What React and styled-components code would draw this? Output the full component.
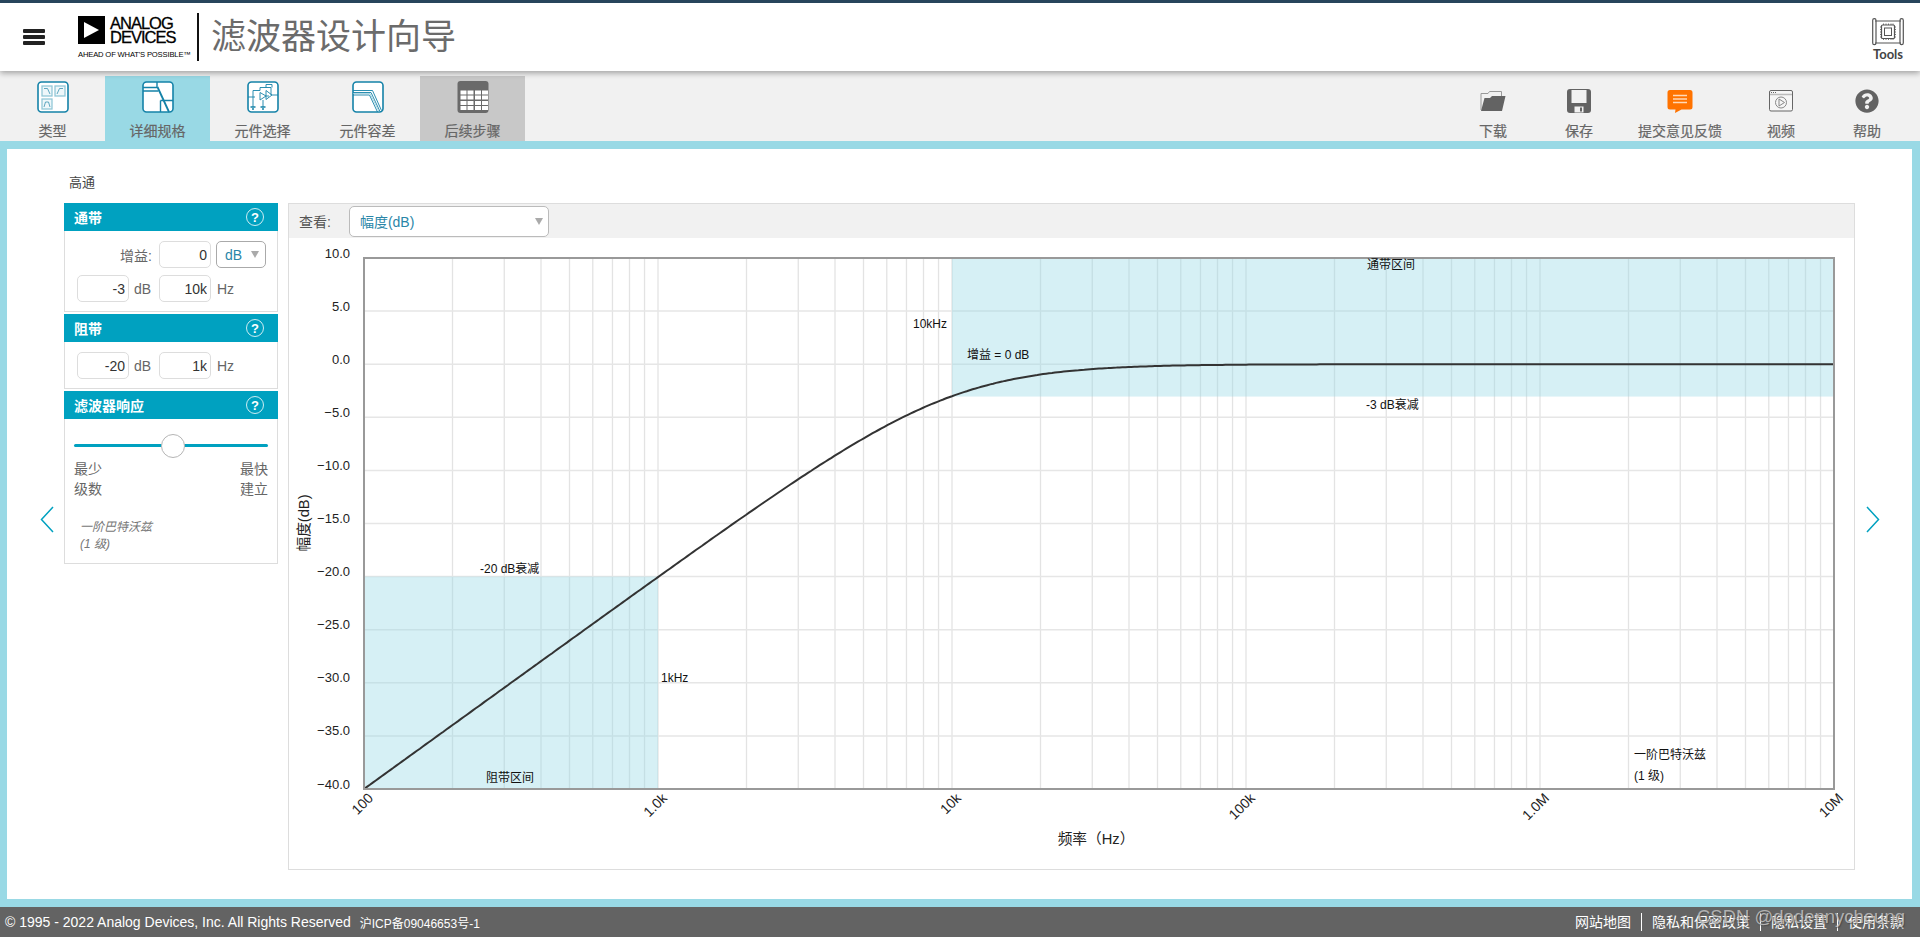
import React from 'react';
import styled, { createGlobalStyle } from 'styled-components';
import { FaQuestionCircle } from 'react-icons/fa';

const FONT = `"Liberation Sans", "Noto Sans CJK SC", sans-serif`;
const TEAL = '#00a1c0';
const FRAME = '#99d9e5';

const GlobalStyle = createGlobalStyle`
  html, body {
    margin: 0;
    padding: 0;
    overflow: hidden;
    font-family: ${FONT};
  }
  * { box-sizing: border-box; }
`;

const Page = styled.div`
  display: flex;
  flex-direction: column;
  width: 1920px;
  height: 937px;
  background: #fff;
`;

const Header = styled.header`
  position: relative;
  z-index: 2;
  display: flex;
  align-items: center;
  height: 71px;
  padding: 0 16px 0 23px;
  border-top: 3px solid #27455c;
  background: #fff;
  box-shadow: 0 2px 6px rgba(0, 0, 0, 0.35);
`;

const Burger = styled.div`
  display: flex;
  flex-direction: column;
  gap: 2.5px;
  width: 22px;
  span {
    height: 3.5px;
    background: #222;
    border-radius: 1px;
  }
`;

const Logo = styled.div`
  display: flex;
  flex-direction: column;
  width: 103px;
  margin-left: 33px;
  color: #000;
`;

const LogoRow = styled.div`
  display: flex;
  gap: 5px;
`;

const LogoWords = styled.div`
  font-size: 16.5px;
  font-weight: 400;
  line-height: 14px;
  letter-spacing: -1px;
  -webkit-text-stroke: 0.3px #000;
`;

const LogoTag = styled.div`
  margin-top: 7px;
  font-size: 7.6px;
  line-height: 7px;
  white-space: nowrap;
  letter-spacing: -0.15px;
`;

const Divider = styled.div`
  width: 2px;
  height: 48px;
  margin: 0 12px 0 16px;
  background: #111;
`;

const Title = styled.h1`
  margin: 0;
  font-size: 35px;
  font-weight: 400;
  line-height: 44px;
  color: #6b6b6b;
`;

const ToolsLink = styled.div`
  display: flex;
  flex-direction: column;
  align-items: center;
  margin-left: auto;
  padding-top: 5px;
  font-family: Lato, ${FONT};
  font-size: 13px;
  font-weight: 700;
  line-height: 16px;
  color: #444;
`;

const Nav = styled.nav`
  display: flex;
  align-items: flex-end;
  height: 70px;
  padding-right: 10px;
  background: #f1f1f1;
`;

const Tab = styled.div`
  display: flex;
  flex-direction: column;
  align-items: center;
  width: 105px;
  height: 65px;
  padding-top: 5px;
  background: ${(p) => (p.$bg ? p.$bg : 'transparent')};
`;

const TabLabel = styled.div`
  margin-top: 9px;
  font-size: 14px;
  line-height: 18px;
  color: #666;
  -webkit-text-stroke: 0.2px #666;
`;

const Actions = styled.div`
  display: flex;
  margin-left: auto;
`;

const Action = styled.div`
  display: flex;
  flex-direction: column;
  align-items: center;
  width: ${(p) => (p.$wide ? '116px' : '86px')};
  height: 70px;
  padding-top: 18px;
  color: #636363;
`;

const ActionIcon = styled.div`
  display: flex;
  align-items: center;
  justify-content: center;
  height: 24px;
`;

const ActionLabel = styled.div`
  margin-top: 9px;
  font-size: 14px;
  line-height: 18px;
  color: #666;
  -webkit-text-stroke: 0.2px #666;
`;

const Frame = styled.div`
  display: flex;
  flex: 1;
  min-height: 0;
  border-style: solid;
  border-color: ${FRAME};
  border-width: 8px 8px 8px 7px;
  background: #fff;
`;

const SideArrow = styled.div`
  display: flex;
  align-items: center;
  justify-content: ${(p) => (p.$right ? 'flex-start' : 'flex-end')};
  width: 57px;
  padding: 0 ${(p) => (p.$right ? '0' : '10px')} 10px ${(p) => (p.$right ? '11px' : '0')};
`;

const Workspace = styled.div`
  flex: 1;
  min-width: 0;
`;

const Caption = styled.div`
  height: 54px;
  padding: 24px 0 0 5px;
  font-size: 13px;
  line-height: 20px;
  color: #444;
`;

const Columns = styled.div`
  display: flex;
  gap: 10px;
`;

const Sidebar = styled.aside`
  display: flex;
  flex-direction: column;
  gap: 2px;
  width: 214px;
`;

const PanelHead = styled.div`
  display: flex;
  align-items: center;
  justify-content: space-between;
  height: 28px;
  padding: 0 14px 0 10px;
  background: ${TEAL};
  font-size: 14px;
  font-weight: 700;
  color: #fff;
`;

const HelpBadge = styled.span`
  display: flex;
  align-items: center;
  justify-content: center;
  width: 18px;
  height: 18px;
  border: 1.5px solid rgba(255, 255, 255, 0.8);
  border-radius: 50%;
  font-size: 13px;
  font-weight: 700;
  line-height: 1;
`;

const PanelBody = styled.div`
  border: 1px solid #ddd;
  border-top: 0;
  padding: ${(p) => p.$pad || '10px 0 9px 12px'};
`;

const FormGrid = styled.div`
  display: grid;
  grid-template-columns: 52px 30px 52px auto;
  row-gap: 7px;
  align-items: center;
  font-size: 14px;
  color: #666;
`;

const GainLabel = styled.div`
  grid-column: 1 / span 2;
  padding-right: 7px;
  text-align: right;
`;

const Unit = styled.div`
  padding-left: ${(p) => p.$left || '5px'};
`;

const NumberBox = styled.input`
  width: 52px;
  height: 27px;
  padding: 0 3px 0 0;
  border: 1px solid #ddd;
  border-radius: 5px;
  outline: none;
  background: #fff;
  font-family: ${FONT};
  font-size: 14px;
  text-align: right;
  color: #333;
`;

const UnitSelect = styled.div`
  display: flex;
  align-items: center;
  justify-content: space-between;
  width: 50px;
  height: 27px;
  margin-left: 5px;
  padding: 0 6px 0 8px;
  border: 1px solid #aaa;
  border-radius: 5px;
  color: #2a86a8;
`;

const Caret = styled.span`
  width: 0;
  height: 0;
  border-left: 4px solid transparent;
  border-right: 4px solid transparent;
  border-top: 7px solid #aaa;
`;

const Slider = styled.div`
  position: relative;
  height: 24px;
  &::before {
    content: '';
    position: absolute;
    left: 0;
    right: 0;
    top: 10px;
    height: 3px;
    border-radius: 2px;
    background: ${TEAL};
  }
`;

const Thumb = styled.div`
  position: absolute;
  left: 87px;
  top: 0;
  width: 24px;
  height: 24px;
  border: 1px solid #b5b5b5;
  border-radius: 50%;
  background: #fff;
`;

const SliderLabels = styled.div`
  display: flex;
  justify-content: space-between;
  margin-top: 1px;
  font-size: 14px;
  line-height: 20px;
  color: #666;
`;

const RightText = styled.div`
  text-align: right;
`;

const OrderNote = styled.div`
  margin: 20px 0 0 6px;
  font-size: 12px;
  font-style: italic;
  line-height: 17px;
  color: #777;
`;

const ChartPanel = styled.section`
  flex: 1;
  height: 667px;
  border: 1px solid #ddd;
`;

const ChartBar = styled.div`
  display: flex;
  align-items: center;
  height: 34px;
  padding-left: 10px;
  background: #f1f1f1;
  font-size: 14px;
  color: #555;
`;

const ViewSelect = styled.div`
  display: flex;
  align-items: center;
  justify-content: space-between;
  width: 200px;
  height: 31px;
  margin-left: 18px;
  padding: 0 5px 0 10px;
  border: 1px solid #bbb;
  border-radius: 5px;
  background: #fff;
  color: #2a86a8;
`;

const ChartSvg = styled.svg`
  display: block;
`;

const AxisText = styled.text`
  font-family: ${FONT};
  font-size: ${(p) => p.$size || '13px'};
  fill: #222;
`;

const TitleText = styled.text`
  font-family: ${FONT};
  font-size: 14.7px;
  fill: #222;
`;

const NoteText = styled.text`
  font-family: ${FONT};
  font-size: 12px;
  fill: #111;
`;

const Footer = styled.footer`
  position: relative;
  display: flex;
  align-items: center;
  height: 30px;
  padding: 0 16px 0 5px;
  background: #636363;
  color: #fff;
  font-size: 14px;
`;

const Icp = styled.span`
  margin-left: 9px;
  font-size: 12px;
`;

const FooterLinks = styled.div`
  display: flex;
  align-items: center;
  margin-left: auto;
`;

const FooterLink = styled.span`
  padding: 0 10px;
  border-left: ${(p) => (p.$first ? '0' : '1px solid #fff')};
  line-height: 18px;
  &:last-child { padding-right: 0; }
`;

const Watermark = styled.div`
  position: absolute;
  right: 15px;
  top: -1px;
  font-size: 18.5px;
  line-height: 22px;
  color: rgba(200, 200, 200, 0.8);
  text-shadow: 1px 1px 1px rgba(60, 60, 60, 0.6);
  pointer-events: none;
`;

const BLUE = '#1482a8';
const PALE = '#93c8d8';

const IconFrame = ({ children }) => (
  <svg width="32" height="32" viewBox="0 0 32 32">
    <rect x="1" y="1" width="30" height="30" rx="3.5" fill="#fff" stroke={BLUE} strokeWidth="1.6" />
    {children}
  </svg>
);

const TypeIcon = () => (
  <IconFrame>
    <g fill="#eef7fa" stroke={PALE} strokeWidth="1.3">
      <rect x="5" y="5" width="10" height="10" />
      <rect x="18" y="5" width="10" height="10" />
      <rect x="5" y="18" width="10" height="10" />
    </g>
    <g fill="none" stroke="#4d9db8" strokeWidth="0.9">
      <path d="M7 7.5h3.5l2.5 5.5" />
      <path d="M20 13l2.5-5.5h3.5" />
      <path d="M7 26l1.5-5h3l1.5 5" />
    </g>
  </IconFrame>
);

const SpecIcon = () => (
  <IconFrame>
    <g fill="none" stroke={BLUE} strokeWidth="1.4">
      <path d="M1 6.5h14.5M1 10h15.5M15 1v5.5" />
      <path d="M15.5 6l11.5 25" strokeWidth="1.8" />
      <path d="M18.5 19.5h12.5M18.5 19.5v11.5" />
    </g>
  </IconFrame>
);

const PartsIcon = () => (
  <IconFrame>
    <g fill="none" stroke={BLUE} strokeWidth="0.9">
      <path d="M1 16h7M13 16l0-4.5 6 3.5-6 4zM19 15h3" />
      <path d="M19 9.5v9l6-4.5zM25 14h6" />
      <path d="M6 16V9.5h7M13 9.5v-3h11V14M19 6.5V3.5h6v3" />
      <path d="M6 16v10M16 19v7" />
      <path d="M3.5 26h5M13.5 26h5" strokeWidth="1.4" />
      <path d="M5 28h2M15 28h2" strokeWidth="1.4" />
    </g>
  </IconFrame>
);

const ToleranceIcon = () => (
  <IconFrame>
    <g fill="none" stroke={BLUE} strokeWidth="0.9">
      <path d="M1 9.5h19.5l9 20" />
      <path d="M1 11.5h18l9 19" />
      <path d="M1 14h16.5l8 17" />
    </g>
    <path d="M1 12.5h17l9 18" fill="none" stroke={PALE} strokeWidth="0.7" />
  </IconFrame>
);

const TableIcon = () => {
  const cols = [3.5, 10.5, 18, 25];
  const rows = [9.5, 14.5, 20, 25];
  return (
    <svg width="32" height="32" viewBox="0 0 32 32">
      <rect x="0.5" y="0" width="31" height="32" rx="3" fill="#6a6a6a" />
      {rows.map((y) =>
        cols.map((x) => <rect key={`${x}-${y}`} x={x} y={y} width="6" height="4" fill="#fff" />)
      )}
    </svg>
  );
};

const FolderIcon = () => (
  <svg width="26" height="22" viewBox="0 0 26 22">
    <path d="M1 20V3.5h7l1.5-2h12V7" fill="none" stroke="#999" strokeWidth="1" />
    <path d="M1 21L4.5 8H10l2-2h13.5L22 21z" fill="#636363" />
  </svg>
);

const SaveIcon = () => (
  <svg width="24" height="24" viewBox="0 0 24 24">
    <rect width="24" height="24" rx="3" fill="#636363" />
    <rect x="4.5" y="1" width="15" height="13" fill="#f1f1f1" />
    <rect x="7.5" y="17.5" width="9" height="6" fill="#f1f1f1" />
    <rect x="13" y="18.5" width="2" height="4" fill="#636363" />
  </svg>
);

const FeedbackIcon = () => (
  <svg width="26" height="24" viewBox="0 0 26 24">
    <path d="M3 1h20a2.5 2.5 0 0 1 2.5 2.5V18a2.5 2.5 0 0 1-2.5 2.5h-8.5L8 24l.5-3.5H3A2.5 2.5 0 0 1 .5 18V3.5A2.5 2.5 0 0 1 3 1z" fill="#ff7300" />
    <path d="M6 6.5h14M6 10h14M6 13.5h14" stroke="#ffd9b8" strokeWidth="1.6" />
  </svg>
);

const VideoIcon = () => (
  <svg width="24" height="22" viewBox="0 0 24 22">
    <rect x="0.5" y="0.5" width="23" height="20.5" rx="1.5" fill="#f6f6f6" stroke="#666" />
    <path d="M1 4.5h22" stroke="#bbb" strokeWidth="1.5" />
    <path d="M2 2.5h1M4 2.5h1M6 2.5h1" stroke="#666" />
    <circle cx="12" cy="12.5" r="5.5" fill="none" stroke="#888" />
    <path d="M10 9l5.5 3.5L10 16z" fill="none" stroke="#888" />
  </svg>
);

const ToolsIcon = () => (
  <svg width="32" height="28" viewBox="0 0 32 28">
    <g fill="none" stroke="#555" strokeWidth="1.2">
      <path d="M3 3h26M3 25h26" />
      <rect x="0.7" y="0.7" width="3.3" height="26" rx="1.6" />
      <rect x="28" y="0.7" width="3.3" height="26" rx="1.6" />
      <rect x="9.5" y="7" width="13" height="13.5" rx="1" />
      <rect x="12.5" y="10" width="7" height="7.5" strokeWidth="1" />
      <path d="M8 9h1.5M8 11.500h1.500M8 14h1.500M8 16.500h1.500M8 19h1.500M22.500 9H24M22.500 11.500H24M22.500 14H24M22.500 16.500H24M22.500 19H24M11.500 5.500V7M14 5.500V7M16.500 5.500V7M19 5.500V7M21 5.500V7M11.500 20.500V22M14 20.500V22M16.500 20.500V22M19 20.500V22M21 20.500V22" strokeWidth="0.8" />
    </g>
  </svg>
);

const ChevronLeft = ({ flip }) => (
  <svg width="14" height="27" viewBox="0 0 14 27" style={flip ? { transform: 'scaleX(-1)' } : undefined}>
    <path d="M13 1L1.5 13.5 13 26" fill="none" stroke={TEAL} strokeWidth="1.5" />
  </svg>
);

// chart geometry, in page coordinates
const X0 = 364;
const DECADE = 294;
const YTOP = 258;
const PX_PER_DB = 10.62;
const xOf = (f) => X0 + Math.log10(f / 100) * DECADE;
const yOf = (db) => YTOP + (10 - db) * PX_PER_DB;
const XEND = xOf(1e7);
const YEND = yOf(-40);

const dbTicks = [];
for (let v = 10; v >= -40; v -= 5) dbTicks.push(v);

const freqLines = [];
for (let d = 100; d < 1e7; d *= 10) {
  for (let m = 1; m < 10; m++) freqLines.push(d * m);
}

const freqLabels = [
  ['100', 100],
  ['1.0k', 1e3],
  ['10k', 1e4],
  ['100k', 1e5],
  ['1.0M', 1e6],
  ['10M', 1e7],
];

const gainAt = (f) => -10 * Math.log10(1 + (1e4 / f) ** 2);

const curve = [];
for (let i = 0; i <= 500; i++) {
  const f = 100 * 10 ** (i / 100);
  curve.push(`${xOf(f).toFixed(1)},${yOf(gainAt(f)).toFixed(1)}`);
}

const dbLabel = (v) => (v < 0 ? `\u2212${Math.abs(v).toFixed(1)}` : v.toFixed(1));

const Chart = () => (
  <ChartSvg width="1565" height="631" viewBox="289 238 1565 631">
    <g stroke="#e3e3e3" strokeWidth="1.3">
      {freqLines.map((f) => (
        <line key={f} x1={xOf(f)} x2={xOf(f)} y1={YTOP} y2={YEND} />
      ))}
    </g>
    <g stroke="#e6e6e6" strokeWidth="1.5">
      {dbTicks.map((v) => (
        <line key={v} x1={X0} x2={XEND} y1={yOf(v)} y2={yOf(v)} />
      ))}
    </g>
    <rect x={xOf(1e4)} y={YTOP} width={XEND - xOf(1e4)} height={yOf(-3) - YTOP + 0.5} fill={FRAME} opacity="0.4" />
    <rect x={X0} y={yOf(-20)} width={xOf(1e3) - X0} height={YEND - yOf(-20)} fill={FRAME} opacity="0.4" />
    <polyline points={curve.join(' ')} fill="none" stroke="#333" strokeWidth="2" />
    <rect x={X0} y={YTOP} width={XEND - X0} height={YEND - YTOP} fill="none" stroke="#999" strokeWidth="2" />

    {dbTicks.map((v) => (
      <AxisText key={v} x="350" y={yOf(v) - 0.5} textAnchor="end">{dbLabel(v)}</AxisText>
    ))}
    {freqLabels.map(([label, f]) => (
      <AxisText
        key={label}
        $size="14px"
        textAnchor="end"
        transform={`translate(${xOf(f) + 10} 799) rotate(-45)`}
      >
        {label}
      </AxisText>
    ))}
    <TitleText transform="translate(309 523) rotate(-90)" textAnchor="middle">幅度(dB)</TitleText>
    <TitleText x="1096" y="844" textAnchor="middle">频率（Hz）</TitleText>

    <NoteText x="1367" y="268.5">通带区间</NoteText>
    <NoteText x="913" y="327.5">10kHz</NoteText>
    <NoteText x="967" y="358.5">增益 = 0 dB</NoteText>
    <NoteText x="1366" y="408.5">-3 dB衰减</NoteText>
    <NoteText x="480" y="572.5">-20 dB衰减</NoteText>
    <NoteText x="661" y="681.5">1kHz</NoteText>
    <NoteText x="486" y="781.5">阻带区间</NoteText>
    <NoteText x="1634" y="758.5">一阶巴特沃兹</NoteText>
    <NoteText x="1634" y="779.5">(1 级)</NoteText>
  </ChartSvg>
);

const tabs = [
  { label: '类型', icon: <TypeIcon /> },
  { label: '详细规格', icon: <SpecIcon />, bg: FRAME },
  { label: '元件选择', icon: <PartsIcon /> },
  { label: '元件容差', icon: <ToleranceIcon /> },
  { label: '后续步骤', icon: <TableIcon />, bg: '#c8c8c8' },
];

const actions = [
  { label: '下载', icon: <FolderIcon /> },
  { label: '保存', icon: <SaveIcon /> },
  { label: '提交意见反馈', icon: <FeedbackIcon />, wide: true },
  { label: '视频', icon: <VideoIcon /> },
  { label: '帮助', icon: <FaQuestionCircle size={24} /> },
];

const PanelTitle = ({ children }) => (
  <PanelHead>
    {children}
    <HelpBadge>?</HelpBadge>
  </PanelHead>
);

const App = () => {
  return (
    <Page>
      <GlobalStyle />
      <Header>
        <Burger><span /><span /><span /></Burger>
        <Logo>
          <LogoRow>
            <svg width="27" height="28" viewBox="0 0 27 28">
              <rect width="27" height="28" fill="#000" />
              <path d="M6 6l15 8-15 8z" fill="#fff" />
            </svg>
            <LogoWords>ANALOG<br />DEVICES</LogoWords>
          </LogoRow>
          <LogoTag>AHEAD OF WHAT'S POSSIBLE™</LogoTag>
        </Logo>
        <Divider />
        <Title>滤波器设计向导</Title>
        <ToolsLink>
          <ToolsIcon />
          Tools
        </ToolsLink>
      </Header>

      <Nav>
        {tabs.map((t) => (
          <Tab key={t.label} $bg={t.bg}>
            {t.icon}
            <TabLabel>{t.label}</TabLabel>
          </Tab>
        ))}
        <Actions>
          {actions.map((a) => (
            <Action key={a.label} $wide={a.wide}>
              <ActionIcon>{a.icon}</ActionIcon>
              <ActionLabel>{a.label}</ActionLabel>
            </Action>
          ))}
        </Actions>
      </Nav>

      <Frame>
        <SideArrow><ChevronLeft /></SideArrow>
        <Workspace>
          <Caption>高通</Caption>
          <Columns>
            <Sidebar>
              <div>
                <PanelTitle>通带</PanelTitle>
                <PanelBody>
                  <FormGrid>
                    <GainLabel>增益:</GainLabel>
                    <NumberBox readOnly value="0" />
                    <UnitSelect>dB<Caret /></UnitSelect>
                    <NumberBox readOnly value="-3" />
                    <Unit>dB</Unit>
                    <NumberBox readOnly value="10k" />
                    <Unit $left="6px">Hz</Unit>
                  </FormGrid>
                </PanelBody>
              </div>
              <div>
                <PanelTitle>阻带</PanelTitle>
                <PanelBody>
                  <FormGrid>
                    <NumberBox readOnly value="-20" />
                    <Unit>dB</Unit>
                    <NumberBox readOnly value="1k" />
                    <Unit $left="6px">Hz</Unit>
                  </FormGrid>
                </PanelBody>
              </div>
              <div>
                <PanelTitle>滤波器响应</PanelTitle>
                <PanelBody $pad="15px 9px 10px 9px">
                  <Slider><Thumb /></Slider>
                  <SliderLabels>
                    <div>最少<br />级数</div>
                    <RightText>最快<br />建立</RightText>
                  </SliderLabels>
                  <OrderNote>一阶巴特沃兹<br />(1 级)</OrderNote>
                </PanelBody>
              </div>
            </Sidebar>
            <ChartPanel>
              <ChartBar>
                查看:
                <ViewSelect>幅度(dB)<Caret /></ViewSelect>
              </ChartBar>
              <Chart />
            </ChartPanel>
          </Columns>
        </Workspace>
        <SideArrow $right><ChevronLeft flip /></SideArrow>
      </Frame>

      <Footer>
        © 1995 - 2022 Analog Devices, Inc. All Rights Reserved
        <Icp>沪ICP备09046653号-1</Icp>
        <FooterLinks>
          <FooterLink $first>网站地图</FooterLink>
          <FooterLink>隐私和保密政策</FooterLink>
          <FooterLink>隐私设置</FooterLink>
          <FooterLink>使用条款</FooterLink>
        </FooterLinks>
        <Watermark>CSDN @dodennycheung</Watermark>
      </Footer>
    </Page>
  );
};

export default App;
